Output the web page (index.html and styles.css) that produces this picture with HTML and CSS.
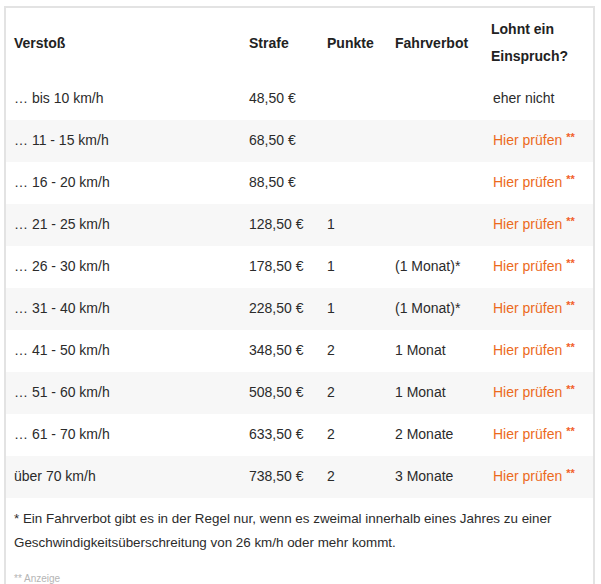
FILE: index.html
```html
<!DOCTYPE html>
<html lang="de">
<head>
<meta charset="utf-8">
<link rel="stylesheet" href="styles.css">
</head>
<body>
<div class="box">
  <table class="fines">
    <colgroup>
      <col class="c1"><col class="c2"><col class="c3"><col class="c4"><col class="c5">
    </colgroup>
    <thead>
      <tr><th>Verstoß</th><th>Strafe</th><th>Punkte</th><th>Fahrverbot</th><th>Lohnt ein Einspruch?</th></tr>
    </thead>
    <tbody>
      <tr><td>… bis 10 km/h</td><td>48,50 €</td><td></td><td></td><td>eher nicht</td></tr>
      <tr><td>… 11 - 15 km/h</td><td>68,50 €</td><td></td><td></td><td><a class="check">Hier prüfen <sup>**</sup></a></td></tr>
      <tr><td>… 16 - 20 km/h</td><td>88,50 €</td><td></td><td></td><td><a class="check">Hier prüfen <sup>**</sup></a></td></tr>
      <tr><td>… 21 - 25 km/h</td><td>128,50 €</td><td>1</td><td></td><td><a class="check">Hier prüfen <sup>**</sup></a></td></tr>
      <tr><td>… 26 - 30 km/h</td><td>178,50 €</td><td>1</td><td>(1 Monat)*</td><td><a class="check">Hier prüfen <sup>**</sup></a></td></tr>
      <tr><td>… 31 - 40 km/h</td><td>228,50 €</td><td>1</td><td>(1 Monat)*</td><td><a class="check">Hier prüfen <sup>**</sup></a></td></tr>
      <tr><td>… 41 - 50 km/h</td><td>348,50 €</td><td>2</td><td>1 Monat</td><td><a class="check">Hier prüfen <sup>**</sup></a></td></tr>
      <tr><td>… 51 - 60 km/h</td><td>508,50 €</td><td>2</td><td>1 Monat</td><td><a class="check">Hier prüfen <sup>**</sup></a></td></tr>
      <tr><td>… 61 - 70 km/h</td><td>633,50 €</td><td>2</td><td>2 Monate</td><td><a class="check">Hier prüfen <sup>**</sup></a></td></tr>
      <tr><td>über 70 km/h</td><td>738,50 €</td><td>2</td><td>3 Monate</td><td><a class="check">Hier prüfen <sup>**</sup></a></td></tr>
    </tbody>
  </table>
  <p class="note">* Ein Fahrverbot gibt es in der Regel nur, wenn es zweimal innerhalb eines Jahres zu einer Geschwindigkeitsüberschreitung von 26 km/h oder mehr kommt.</p>
  <p class="ad">** Anzeige</p>
</div>
</body>
</html>
```

FILE: styles.css
```css
html, body {
  margin: 0;
  padding: 0;
  background: #fff;
}
body {
  padding: 6px 6px 0 4px;
  font-family: "Liberation Sans", Arial, sans-serif;
  color: #2b2b2b;
}
.box {
  border: 2px solid #e3e3e3;
  border-bottom: none;
  width: 587px;
  height: 600px;
}
.fines {
  width: 587px;
  border-collapse: collapse;
  table-layout: fixed;
  font-size: 14px;
  line-height: 27px;
}
.c1 { width: 235px; }
.c2 { width: 78px; }
.c3 { width: 68px; }
.c4 { width: 98px; }
.c5 { width: 108px; }
.fines th {
  text-align: left;
  font-weight: bold;
  color: #222;
  padding: 8px 8px;
  vertical-align: middle;
}
.fines th:nth-child(5) {
  padding-left: 6px;
}
.fines td {
  padding: 7px 8px 8px;
  white-space: nowrap;
}
.fines tbody tr:nth-child(even) td {
  background: #f7f7f7;
}
.check {
  color: #ec6a1c;
  text-decoration: none;
}
.check sup {
  font-size: 11px;
  font-weight: bold;
  line-height: 0;
  vertical-align: 4px;
  color: #f2602a;
}
.note {
  margin: 9px 8px 0;
  font-size: 13.4px;
  line-height: 24px;
  color: #2b2b2b;
}
.ad {
  margin: 17px 8px 0;
  font-size: 10px;
  line-height: 14px;
  color: #b5b5b5;
}
```
